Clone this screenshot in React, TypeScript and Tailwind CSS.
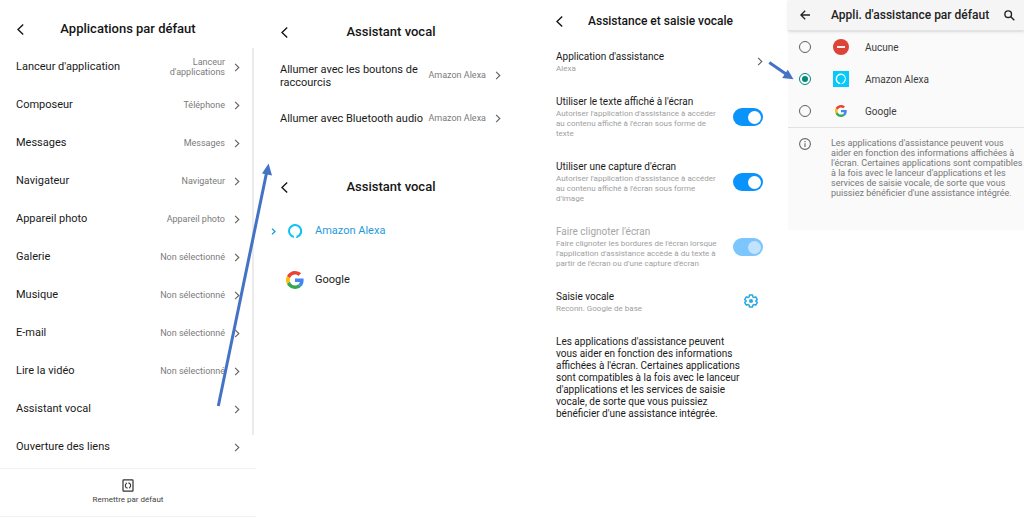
import type { ReactNode } from "react";

const defaultApps = [
  { name: "Lanceur d'application", value: "Lanceur d'applications" },
  { name: "Composeur", value: "Téléphone" },
  { name: "Messages", value: "Messages" },
  { name: "Navigateur", value: "Navigateur" },
  { name: "Appareil photo", value: "Appareil photo" },
  { name: "Galerie", value: "Non sélectionné" },
  { name: "Musique", value: "Non sélectionné" },
  { name: "E-mail", value: "Non sélectionné" },
  { name: "Lire la vidéo", value: "Non sélectionné" },
  { name: "Assistant vocal", value: "" },
  { name: "Ouverture des liens", value: "" },
];

const triggers = [
  "Allumer avec les boutons de raccourcis",
  "Allumer avec Bluetooth audio",
];

function BackIcon() {
  return (
    <svg className="h-[11px] w-[7px]" viewBox="0 0 7 11" fill="none" stroke="currentColor" strokeWidth="1.4" aria-hidden="true">
      <path d="M6.2 0.6 1 5.5l5.2 4.9" />
    </svg>
  );
}

function Chevron({ className, weight = 1.3 }: { className: string; weight?: number }) {
  return (
    <svg className={`shrink-0 ${className}`} viewBox="0 0 6 10" fill="none" stroke="currentColor" strokeWidth={weight} aria-hidden="true">
      <path d="M0.9 0.9 5 5 0.9 9.1" />
    </svg>
  );
}

function GoogleLogo({ className }: { className: string }) {
  return (
    <svg className={`shrink-0 ${className}`} viewBox="0 0 48 48" aria-hidden="true">
      <path fill="#EA4335" d="M24 9.5c3.54 0 6.71 1.22 9.21 3.6l6.85-6.85C35.9 2.38 30.47 0 24 0 14.62 0 6.51 5.38 2.56 13.22l7.98 6.19C12.43 13.72 17.74 9.5 24 9.5z" />
      <path fill="#4285F4" d="M46.98 24.55c0-1.57-.15-3.09-.38-4.55H24v9.02h12.94c-.58 2.96-2.26 5.48-4.78 7.18l7.73 6c4.51-4.18 7.09-10.36 7.09-17.65z" />
      <path fill="#FBBC05" d="M10.53 28.59c-.48-1.45-.76-2.99-.76-4.59s.27-3.14.76-4.59l-7.98-6.19C.92 16.46 0 20.12 0 24c0 3.88.92 7.54 2.56 10.78l7.97-6.19z" />
      <path fill="#34A853" d="M24 48c6.48 0 11.93-2.13 15.89-5.81l-7.73-6c-2.15 1.45-4.92 2.3-8.16 2.3-6.26 0-11.57-4.22-13.47-9.91l-7.98 6.19C6.51 42.62 14.62 48 24 48z" />
    </svg>
  );
}

function AlexaRing() {
  return (
    <svg className="h-3.5 w-3.5 shrink-0" viewBox="0 0 14 14" fill="none" stroke="#0fc2f7" strokeWidth="2" aria-hidden="true">
      <path d="M6 12.9A6 6 0 1 1 8.6 12.8" />
      <path fill="#0fc2f7" stroke="none" d="M12.9 7.2C12.2 10 9.8 12.200 7.600 13.900c2.800.1 6.200-2.300 6.300-6z" />
    </svg>
  );
}

function AlexaTile() {
  return (
    <svg className="h-4 w-4 shrink-0" viewBox="0 0 16 16" aria-hidden="true">
      <path fill="#05c8fb" d="M0 0h16v16H0z" />
      <path fill="#fff" fillRule="evenodd" d="M8 2.600a5.400 5.400 0 0 0-.7 10.750v-1.100c0-.3-.15-.45-.4-.55A3.900 3.900 0 1 1 11.900 7.700C11.800 10 9.200 12 7.700 13.350A5.400 5.400 0 0 0 8 2.600z" />
    </svg>
  );
}

function NoneIcon() {
  return (
    <svg className="h-4 w-4 shrink-0" viewBox="0 0 16 16" aria-hidden="true">
      <circle cx="8" cy="8" r="8" fill="#db4437" />
      <path fill="#fff" d="M4 7.1h8v1.8H4z" />
    </svg>
  );
}

function Header({ title, className }: { title: string; className: string }) {
  return (
    <header className={`grid items-center text-[#151515] ${className}`}>
      <button type="button" aria-label="Retour" className="flex justify-start">
        <BackIcon />
      </button>
      <h2 className="whitespace-nowrap text-center leading-4 font-medium">{title}</h2>
    </header>
  );
}

function SwitchRow({ id, title, text, disabled }: { id: string; title: string; text: string; disabled?: boolean }) {
  return (
    <div className="flex h-[65px]">
      <label htmlFor={id} className="w-[165px] shrink-0">
        <span className={`block text-[10px] leading-[14px] ${disabled ? "text-[#a6a6a6]" : "text-[#1a1a1a]"}`}>{title}</span>
        <span className="block text-[8px] leading-[10px] text-[#a0a0a0]">{text}</span>
      </label>
      <input
        id={id}
        type="checkbox"
        role="switch"
        defaultChecked
        disabled={disabled}
        className="ml-auto mt-[13px] flex h-[18px] w-[30px] shrink-0 appearance-none items-center rounded-full bg-[#ccc] px-0.5 before:h-[13px] before:w-[13px] before:rounded-full before:bg-white checked:justify-end checked:bg-[#0a93fb] disabled:bg-[#7cc5fd] disabled:before:bg-[#c2e3fd]"
      />
    </div>
  );
}

function RadioRow({ id, label, icon, checked }: { id: string; label: string; icon: ReactNode; checked?: boolean }) {
  return (
    <label htmlFor={id} className="flex h-8 items-center pl-[11px] text-[10px] text-[#3c3c3c]">
      <input
        id={id}
        type="radio"
        name="assistant"
        defaultChecked={checked}
        className="flex h-3 w-3 shrink-0 appearance-none items-center justify-center rounded-full border border-[#5f5f5f] checked:border-[#00897b] checked:before:h-1.5 checked:before:w-1.5 checked:before:rounded-full checked:before:bg-[#00897b]"
      />
      <span className="ml-[22px] flex w-4 shrink-0 justify-center">{icon}</span>
      <span className="ml-4">{label}</span>
    </label>
  );
}

function DefaultApps() {
  return (
    <section className="relative flex flex-col">
      <Header title="Applications par défaut" className="h-12 grid-cols-[1fr_auto_1fr] pt-[10px] pl-[17px] pr-[17px] text-[13px]" />
      <ul>
        {defaultApps.map((app) => (
          <li key={app.name}>
            <button type="button" className="flex h-[38px] w-full items-center justify-between pl-4 pr-4 text-left">
              <span className="whitespace-nowrap text-[11px] text-[#1a1a1a]">{app.name}</span>
              <span className="flex items-center gap-[9px]">
                <span className="w-[72px] text-right text-[9px] leading-[10px] text-[#7b7b7b]">{app.value}</span>
                <Chevron className="h-[9px] w-1.5 text-[#666]" />
              </span>
            </button>
          </li>
        ))}
      </ul>
      <div className="absolute top-12 right-[2px] h-[387px] w-0.5 bg-[#ebebeb]" />
      <footer className="mt-0.5 flex h-[49px] justify-center border-t border-b border-[#f1f1f1]">
        <button type="button" className="flex flex-col items-center gap-[3px] pt-2.5 text-[8px] leading-[10px] text-[#444]">
          <svg className="h-[13px] w-3" viewBox="0 0 12 13" fill="none" stroke="#333" strokeWidth="1.2" aria-hidden="true">
            <rect x="1" y="0.8" width="10" height="11.4" rx="0.6" />
            <path d="M4.600 4.200A2.700 2.700 0 0 0 5.600 9.150M7.400 8.800A2.700 2.700 0 0 0 6.400 3.850" strokeWidth="1.100" />
            <path d="M3.400 3.700h1.700v1.100zM8.600 9.300H6.900V8.200z" fill="#333" stroke="none" />
          </svg>
          Remettre par défaut
        </button>
      </footer>
    </section>
  );
}

function VoiceAssistant() {
  return (
    <div className="flex flex-col gap-[15px] pr-3.5">
      <section>
        <Header title="Assistant vocal" className="h-[54px] grid-cols-[1fr_auto_1fr] pt-[10px] pl-[25px] pr-[25px] text-[13px]" />
        {triggers.map((name) => (
          <button key={name} type="button" className="flex h-[43px] w-full items-center pl-6 pr-[25px] text-left">
            <span className="w-[146px] shrink-0 text-[11px] leading-[13px] text-[#1a1a1a]">{name}</span>
            <span className="ml-auto flex items-center gap-[9px] text-[9px] whitespace-nowrap text-[#7b7b7b]">
              Amazon Alexa
              <Chevron className="h-[9px] w-1.5 text-[#666]" />
            </span>
          </button>
        ))}
      </section>
      <section>
        <Header title="Assistant vocal" className="h-[54px] grid-cols-[1fr_auto_1fr] pt-[10px] pl-[25px] pr-[25px] text-[13px]" />
        <div className="flex flex-col gap-[5px] text-[11px]">
          <button type="button" className="flex h-11 items-center pl-[15px] text-[#1e9bdc]">
            <Chevron className="h-[7px] w-[5px] text-[#1e9bdc]" weight={2} />
            <span className="ml-[9px] flex w-5 justify-center"><AlexaRing /></span>
            <span className="ml-[10px]">Amazon Alexa</span>
          </button>
          <button type="button" className="flex h-11 items-center pl-[29px] text-[#1a1a1a]">
            <span className="flex w-5 justify-center"><GoogleLogo className="h-[18px] w-[18px]" /></span>
            <span className="ml-[10px]">Google</span>
          </button>
        </div>
      </section>
    </div>
  );
}

function VoiceInput() {
  return (
    <section className="pl-4 pr-[25px]">
      <Header title="Assistance et saisie vocale" className="h-[50px] grid-cols-[32px_auto_1fr] pb-2 text-[12px]" />
      <button type="button" className="flex h-[45px] w-full justify-between text-left">
        <span>
          <span className="block text-[10px] leading-[14px] text-[#1a1a1a]">Application d'assistance</span>
          <span className="block text-[8px] leading-[10px] text-[#a0a0a0]">Alexa</span>
        </span>
        <Chevron className="mt-[7px] h-[9px] w-1.5 text-[#666]" />
      </button>
      <SwitchRow id="screen-text" title="Utiliser le texte affiché à l'écran" text="Autoriser l'application d'assistance à accéder au contenu affiché à l'écran sous forme de texte" />
      <SwitchRow id="screen-capture" title="Utiliser une capture d'écran" text="Autoriser l'application d'assistance à accéder au contenu affiché à l'écran sous forme d'image" />
      <SwitchRow id="screen-flash" disabled title="Faire clignoter l'écran" text="Faire clignoter les bordures de l'écran lorsque l'application d'assistance accède à du texte à partir de l'écran ou d'une capture d'écran" />
      <div className="flex h-[46px] justify-between pr-[5px]">
        <div>
          <h3 className="text-[10px] leading-[14px] text-[#1a1a1a]">Saisie vocale</h3>
          <p className="text-[8px] leading-[10px] text-[#a0a0a0]">Reconn. Google de base</p>
        </div>
        <button type="button" aria-label="Paramètres de saisie vocale" className="mt-1 flex h-3.5 w-3.5 text-[#29a9e0]">
          <svg className="h-3.5 w-3.5" viewBox="0 0 24 24" fill="none" stroke="currentColor" strokeWidth="2.6" strokeLinejoin="round" aria-hidden="true">
            <path d="M9.300 1.800h5.400l.5 3.200 1.900 1.100 3-1.200 2.700 4.700-2.500 2v.8l2.500 2-2.700 4.700-3-1.200-1.900 1.100-.5 3.200H9.300L8.800 19l-1.900-1.100-3 1.200-2.700-4.700 2.500-2v-.8l-2.500-2 2.700-4.700 3 1.200L8.800 5z" />
            <circle cx="12" cy="12" r="3.5" fill="currentColor" stroke="none" />
          </svg>
        </button>
      </div>
      <p className="w-[187px] text-[10px] leading-3 text-[#1a1a1a]">
        Les applications d'assistance peuvent vous aider en fonction des informations affichées à l'écran. Certaines applications sont compatibles à la fois avec le lanceur d'applications et les services de saisie vocale, de sorte que vous puissiez bénéficier d'une assistance intégrée.
      </p>
    </section>
  );
}

function AssistantPicker() {
  return (
    <section className="self-start bg-[#fafafa] pb-8">
      <header className="flex h-[31px] items-center border-b border-[#e2e2e2] bg-[#f5f5f5] pl-3 pr-[9px] text-[#222] shadow-sm">
        <button type="button" aria-label="Retour">
          <svg className="h-2.5 w-2.5" viewBox="0 0 10 10" fill="none" stroke="currentColor" strokeWidth="1.3" aria-hidden="true">
            <path d="M10 5H1M5.2 0.7 0.9 5l4.3 4.3" />
          </svg>
        </button>
        <h2 className="ml-[21px] text-[12px] font-medium whitespace-nowrap">Appli. d'assistance par défaut</h2>
        <button type="button" aria-label="Rechercher" className="ml-auto">
          <svg className="h-[11px] w-[11px]" viewBox="0 0 11 11" fill="none" stroke="currentColor" strokeWidth="1.4" aria-hidden="true">
            <circle cx="4.2" cy="4.2" r="3.3" />
            <path d="m6.6 6.6 3.700 3.700" />
          </svg>
        </button>
      </header>
      <div className="border-b border-[#e2e2e2]">
        <RadioRow id="none" label="Aucune" icon={<NoneIcon />} />
        <RadioRow id="alexa" label="Amazon Alexa" icon={<AlexaTile />} checked />
        <RadioRow id="google" label="Google" icon={<GoogleLogo className="h-3 w-3" />} />
      </div>
      <div className="flex items-start gap-5 pt-2.5 pl-[11px]">
        <svg className="h-3 w-3 shrink-0" viewBox="0 0 12 12" fill="none" stroke="#666" strokeWidth="1.1" aria-hidden="true">
          <circle cx="6" cy="6" r="5.4" />
          <path d="M6 5.3V9M6 3v1.2" />
        </svg>
        <p className="w-[193px] shrink-0 text-[9px] leading-[10px] text-[#777]">
          Les applications d'assistance peuvent vous aider en fonction des informations affichées à l'écran. Certaines applications sont compatibles à la fois avec le lanceur d'applications et les services de saisie vocale, de sorte que vous puissiez bénéficier d'une assistance intégrée.
        </p>
      </div>
    </section>
  );
}

export default function App() {
  return (
    <main className="relative grid min-h-screen grid-cols-[minmax(0,256fr)_minmax(0,284fr)_minmax(0,248fr)_minmax(0,236fr)] bg-white font-['Roboto',sans-serif]">
      <DefaultApps />
      <VoiceAssistant />
      <VoiceInput />
      <AssistantPicker />
      <svg className="pointer-events-none absolute top-[163px] left-[214px] h-[245px] w-[62px]" viewBox="0 0 62 245" aria-hidden="true">
        <path d="M4.3 243 52.5 10" stroke="#4472c4" strokeWidth="3" />
        <path d="M54.6 0.5 48 10.5 58 12.5z" fill="#4472c4" />
      </svg>
      <svg className="pointer-events-none absolute top-[58px] left-[766px] h-6 w-8" viewBox="0 0 32 24" aria-hidden="true">
        <path d="M3.3 4.5 20 16" stroke="#4472c4" strokeWidth="3" />
        <path d="M27.5 21.2 21.8 11.8 16.2 20z" fill="#4472c4" />
      </svg>
    </main>
  );
}
